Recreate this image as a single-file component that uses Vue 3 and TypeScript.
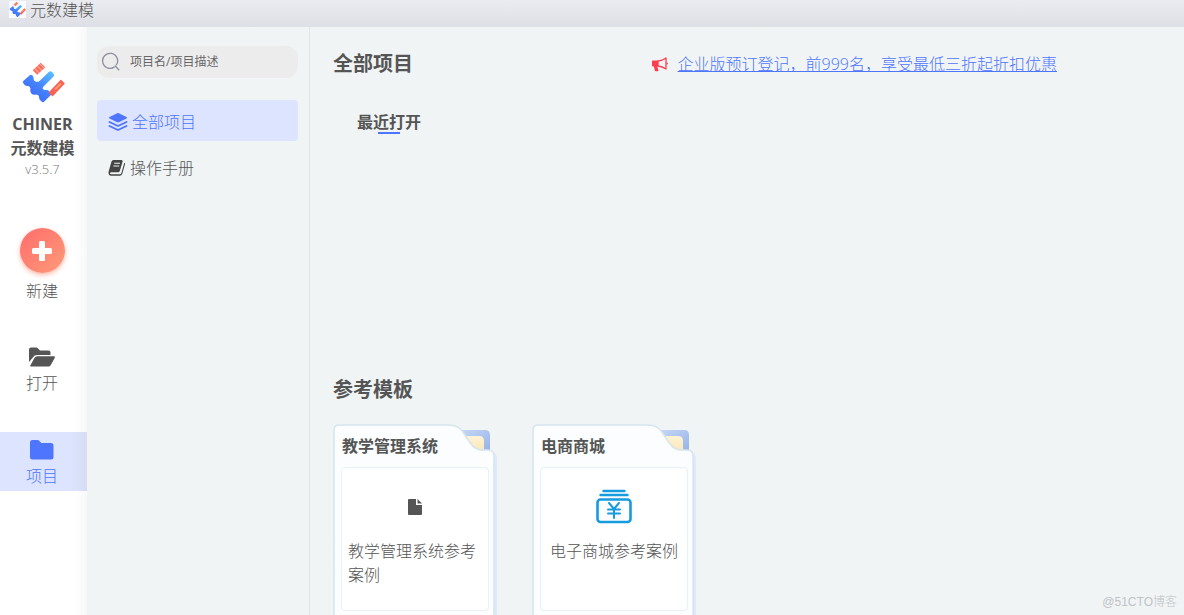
<script setup lang="ts">
import { ref } from 'vue'

interface Template {
  name: string
  description: string
  icon: 'file' | 'money'
}

const keyword = ref('')
const templates: Template[] = [
  { name: '教学管理系统', description: '教学管理系统参考案例', icon: 'file' },
  { name: '电商商城', description: '电子商城参考案例', icon: 'money' },
]
</script>

<template>
  <div class="app">
    <svg class="defs" width="0" height="0" aria-hidden="true">
      <defs>
        <linearGradient id="blue" x1="1" y1="0" x2="0.2" y2="1">
          <stop offset="0" stop-color="#5cc4ff" />
          <stop offset="0.5" stop-color="#4584ff" />
          <stop offset="1" stop-color="#3b63f5" />
        </linearGradient>
        <linearGradient id="folder" x1="0" y1="0" x2="1" y2="1">
          <stop offset="0" stop-color="#ccdcf7" />
          <stop offset="1" stop-color="#8fade6" />
        </linearGradient>
        <linearGradient id="paper" x1="0" y1="0" x2="0" y2="1">
          <stop offset="0" stop-color="#fdf3d6" />
          <stop offset="1" stop-color="#fbe3ac" />
        </linearGradient>
        <symbol id="logo" viewBox="0 0 44 44">
          <path
            d="M28 10.800Q29.500 9.500 31 11L32.500 12.500Q34 14 32.500 15.500L22 26Q21 27.500 22.500 28.500Q24 29.300 25.500 29Q27 28.800 28 30L29.700 31.700Q31 33 29.700 34.300L23.300 40.500Q22 41.800 20.600 40.500L18.800 38.700Q18 37.800 18.200 36.500Q18.200 34 15.500 33.500Q12 34.500 10.200 32.300Q8.500 30 9.500 27.500Q9.200 25.200 7 25Q5 25.200 4 24.200L2.300 22.300Q1.200 21 2.500 19.700L8.800 14.300Q10.200 13.200 11.500 14.500Q13 16 12.600 18Q12.800 20.200 15 20.700Q17 21.200 18.500 20Z"
            fill="url(#blue)"
          />
          <path d="M14 11.500L22 4" stroke="#fb6f5c" stroke-width="6.500" />
          <path d="M14 7.500L18.500 12.500M16.700 5.200L21.200 10M19.200 3L23.500 7.500" stroke="#ffd3cb" stroke-width="0.800" />
          <path d="M31.500 31.500L40 22.500" stroke="#fb6253" stroke-width="5.500" stroke-linecap="square" stroke-linejoin="round" />
          <path d="M34 28.500L40 22.500" stroke="#ff9a77" stroke-width="2" />
        </symbol>
      </defs>
    </svg>

    <header class="titlebar">
      <svg class="mini-logo"><use href="#logo" /></svg>
      <span>元数建模</span>
    </header>

    <div class="body">
      <nav class="rail">
        <div class="brand">
          <svg class="big-logo"><use href="#logo" /></svg>
          <strong>CHINER</strong>
          <strong>元数建模</strong>
          <small>v3.5.7</small>
        </div>
        <button class="rail-item create" type="button">
          <span class="plus">
            <svg width="20" height="20" viewBox="0 0 20 20">
              <path
                d="M8.500 0h3a1.500 1.500 0 0 1 1.500 1.500V7h5.500A1.500 1.500 0 0 1 20 8.500v3a1.500 1.500 0 0 1-1.500 1.500H13v5.500a1.500 1.500 0 0 1-1.500 1.500h-3A1.500 1.500 0 0 1 7 18.500V13H1.500A1.500 1.500 0 0 1 0 11.500v-3A1.500 1.500 0 0 1 1.500 7H7V1.500A1.500 1.500 0 0 1 8.500 0z"
                fill="#fff"
              />
            </svg>
          </span>
          <span>新建</span>
        </button>
        <button class="rail-item open" type="button">
          <svg width="26" height="20" viewBox="0 0 26 20" fill="#555">
            <path d="M0 15V2.500Q0 .5 2 .5H7Q8 .5 8.800 1.300L11 3.600H19.500Q21.500 3.600 21.500 5.600V8H8Q5.500 8 4.300 10Z" />
            <path d="M1.300 18.500L5.400 11Q6.400 9.300 8.200 9.300H25Q26.400 9.500 25.700 10.900L21.800 18Q21 19.500 19.400 19.500H2Q.9 19.400 1.300 18.500Z" />
          </svg>
          <span>打开</span>
        </button>
        <button class="rail-item active" type="button" aria-current="page">
          <svg width="24" height="20" viewBox="0 0 24 20">
            <path
              d="M2.500 0H7.500Q8.500 0 9.200.7L11.300 3H21Q23.500 3 23.500 5.500V17Q23.500 19.500 21 19.500H2.500Q0 19.500 0 17V2.500Q0 0 2.500 0Z"
              fill="#4e75fd"
            />
          </svg>
          <span>项目</span>
        </button>
      </nav>

      <aside class="panel">
        <label class="search">
          <svg width="20" height="20" viewBox="0 0 20 20" fill="none" stroke="#8b8f9e" stroke-width="1.300">
            <path d="M13.500 14.900A7.500 7.500 0 1 1 15.200 13.200M13.800 13.500L18.200 18.200" />
          </svg>
          <input v-model="keyword" type="text" placeholder="项目名/项目描述" aria-label="项目名/项目描述" />
        </label>
        <a class="entry selected" href="#projects">
          <svg width="20" height="20" viewBox="0 0 20 20" fill="#4e75fd">
            <path d="M9.200 1.200Q10 .9 10.800 1.200L18.500 5Q19.600 5.700 18.500 6.400L10.800 10.200Q10 10.500 9.200 10.200L1.500 6.400Q.4 5.700 1.500 5Z" />
            <path
              d="M1.500 10L10 14L18.500 10M1.500 14L10 18L18.500 14"
              fill="none"
              stroke="#4e75fd"
              stroke-width="1.900"
              stroke-linecap="round"
              stroke-linejoin="round"
            />
          </svg>
          <span>全部项目</span>
        </a>
        <a class="entry" href="#manual">
          <svg width="18" height="18" viewBox="0 0 18 18">
            <path
              d="M5.500 1H13.500Q15 1 14.600 2.500L11.800 12Q11.400 13.300 10 13.300H3Q1.700 13.500 2 14.500Q2.200 15.200 3.200 15.200H12Q13 15.200 13.300 14.300L16.300 3.800Q17.300 4.200 17 5.300L14.200 14.900Q13.600 16.700 11.800 16.700H2.800Q.5 16.500.5 14Q.4 13.200.7 12.300L3.500 2.500Q4 1 5.500 1Z"
              fill="#444"
            />
            <path d="M6.200 4.300H12M5.400 7H11.200" stroke="#f0f4f5" stroke-width="1.100" />
          </svg>
          <span>操作手册</span>
        </a>
      </aside>

      <main class="content">
        <div class="heading">
          <h1>全部项目</h1>
          <a class="notice" href="#enterprise">
            <svg width="16" height="15" viewBox="0 0 16 15">
              <path d="M0 4.200Q0 3.500.8 3.500H6V9.500H5.300L6.500 13.600Q6.400 14.300 5.600 14.300H3.700Q3 14.300 2.800 13.500L1.900 9.500H.8Q0 9.500 0 8.800Z" fill="#fb3f50" />
              <path d="M6 4Q10.500 3.600 14 1V12Q10.500 9.400 6 9Z" fill="none" stroke="#fb3f50" stroke-width="1.300" stroke-linejoin="round" />
              <path d="M14.500 5.300Q16 5.500 16 6.500T14.500 7.800Z" fill="#fb3f50" />
            </svg>
            <span>企业版预订登记，前999名，享受最低三折起折扣优惠</span>
          </a>
        </div>
        <section class="recent">
          <h2>最近打开</h2>
        </section>
        <section>
          <h1>参考模板</h1>
          <div class="cards">
            <article v-for="item in templates" :key="item.name" class="card">
              <svg class="shape" width="166" height="200" viewBox="0 0 166 200">
                <path d="M120 6H152Q157 6 157 11V32H120Z" fill="url(#folder)" />
                <path d="M120 12H146Q151 12 151 17V32H120Z" fill="url(#paper)" />
                <path d="M159 28Q164 29 164 35V200H159Z" fill="#dfe9fb" />
                <path
                  d="M1 205V6Q1 1 6 1H115C125 1 128 5 132 11C137 19 140 26 151 26H155Q161 26 161 32V205Z"
                  fill="#fbfdff"
                  stroke="#d6e5ee"
                  stroke-width="1.500"
                />
              </svg>
              <h3>{{ item.name }}</h3>
              <div class="inner">
                <svg v-if="item.icon === 'file'" width="40" height="40" viewBox="0 0 40 40">
                  <path d="M14 12H21V18H27V27Q27 28 26 28H14Q13 28 13 27V13Q13 12 14 12Z" fill="#555" />
                  <path d="M22.500 12L27 16.500H22.500Z" fill="#555" />
                </svg>
                <svg v-else width="40" height="40" viewBox="0 0 40 40" fill="none" stroke="#169bdf" stroke-linecap="round">
                  <rect x="3.500" y="12.500" width="33" height="22.500" rx="3" stroke-width="2.600" />
                  <path d="M9.500 4H30.500M6.500 8H33.500" stroke-width="2.400" />
                  <path d="M15 16L20 22L25 16M20 22V31M14 22.500H26M14 26.500H26" stroke-width="2" />
                </svg>
                <p>{{ item.description }}</p>
              </div>
            </article>
          </div>
        </section>
        <span class="watermark">@51CTO博客</span>
      </main>
    </div>
  </div>
</template>

<style>
body {
  margin: 0;
}
</style>

<style scoped>
.app {
  display: flex;
  flex-direction: column;
  height: 100vh;
  overflow: hidden;
  background: #f0f4f5;
  color: #555;
  font-family: "Open Sans", "Noto Sans CJK SC", sans-serif;
  font-size: 16px;
  line-height: 24px;
  font-weight: 300;
}
.defs {
  position: absolute;
}
h1,
h2,
h3,
p {
  margin: 0;
}
h1 {
  font-size: 20px;
  line-height: 28px;
  font-weight: 700;
}
svg {
  flex: none;
}
.titlebar {
  display: flex;
  flex: none;
  align-items: center;
  gap: 4px;
  height: 27px;
  padding: 0 9px 8px;
  box-sizing: border-box;
  background: linear-gradient(#ebecf1, #dddfe6);
}
.mini-logo {
  width: 17px;
  height: 17px;
  background: #fafbfe;
}
.body {
  display: flex;
  flex: 1;
  min-height: 0;
}
.rail {
  flex: none;
  width: 87px;
  background: linear-gradient(to right, #fff 76px, #f7f8f9);
}
.brand {
  display: flex;
  flex-direction: column;
  align-items: center;
  padding: 34px 0 50px;
  width: 85px;
}
.brand strong {
  font-weight: 700;
}
.big-logo {
  width: 44px;
  height: 44px;
  margin-bottom: 7px;
}
.brand small {
  font-size: 13px;
  line-height: 18px;
  color: #777;
}
.rail-item {
  display: flex;
  flex-direction: column;
  align-items: center;
  width: 100%;
  padding: 0 3px 0 0;
  border: 0;
  background: none;
  color: inherit;
  font: inherit;
}
.create {
  gap: 6px;
}
.plus {
  display: grid;
  place-items: center;
  width: 45px;
  height: 45px;
  border-radius: 50%;
  background: linear-gradient(135deg, #ff6c6c, #ff9b78);
  box-shadow: 0 2px 5px #ffb7a8;
}
.open {
  gap: 4px;
  margin: 44px 0 37px;
}
.active {
  gap: 4px;
  padding-top: 8px;
  padding-bottom: 3px;
  background: linear-gradient(to right, #dde4ff 70px, #d6dcf3);
  color: #4e75fd;
}
.panel {
  flex: none;
  width: 223px;
  box-sizing: border-box;
  padding: 19px 11px 0 10px;
  border-right: 1px solid #e0e5f0;
}
.search {
  display: flex;
  align-items: center;
  gap: 9px;
  height: 32px;
  margin-bottom: 22px;
  padding: 0 4px;
  border-radius: 12px;
  background: #ececec;
}
.search input {
  flex: 1;
  min-width: 0;
  padding: 0;
  border: 0;
  outline: 0;
  background: none;
  color: #555;
  font: inherit;
  font-size: 12px;
  font-weight: 400;
}
.search input::placeholder {
  color: #666;
  opacity: 1;
}
.entry {
  display: flex;
  align-items: center;
  gap: 4px;
  height: 41px;
  margin-bottom: 5px;
  padding: 2px 11px 0;
  box-sizing: border-box;
  border-radius: 4px;
  color: inherit;
  text-decoration: none;
}
.selected {
  background: #dde4ff;
  color: #4e75fd;
}
.content {
  flex: 1;
  min-width: 0;
  padding: 23px 23px 0;
}
.heading {
  display: flex;
  justify-content: space-between;
  align-items: center;
}
.notice {
  display: flex;
  align-items: center;
  gap: 10px;
  margin-right: 104px;
  color: #4e75fd;
  text-decoration: none;
}
.notice span {
  text-decoration: underline;
}
.recent {
  height: 266px;
  padding: 32px 24px 0;
  box-sizing: border-box;
  margin-bottom: 32px;
}
.recent h2 {
  width: 64px;
  font-size: 16px;
  line-height: 24px;
}
.recent h2::after {
  content: "";
  display: block;
  width: 22px;
  height: 2px;
  margin: -2px auto 0;
  background: #4e75fd;
}
.cards {
  display: flex;
  gap: 33px;
  margin-top: 20px;
}
.card {
  position: relative;
  width: 166px;
  height: 200px;
  padding: 10px 9px 0;
  box-sizing: border-box;
}
.shape {
  position: absolute;
  top: 0;
  left: 0;
}
.card h3 {
  position: relative;
  font-size: 16px;
  line-height: 24px;
}
.inner {
  position: relative;
  display: flex;
  flex-direction: column;
  align-items: center;
  gap: 12px;
  width: 148px;
  height: 144px;
  margin: 9px 0 0 -1px;
  padding: 19px 6px 0;
  box-sizing: border-box;
  border: 1px solid #e8f0fc;
  border-radius: 4px;
  background: #fff;
}
.watermark {
  position: absolute;
  right: 7px;
  bottom: 4px;
  color: #bfc3c6;
  font-family: "Liberation Sans", "Noto Sans CJK SC", sans-serif;
  font-size: 12px;
  line-height: 18px;
}
</style>
